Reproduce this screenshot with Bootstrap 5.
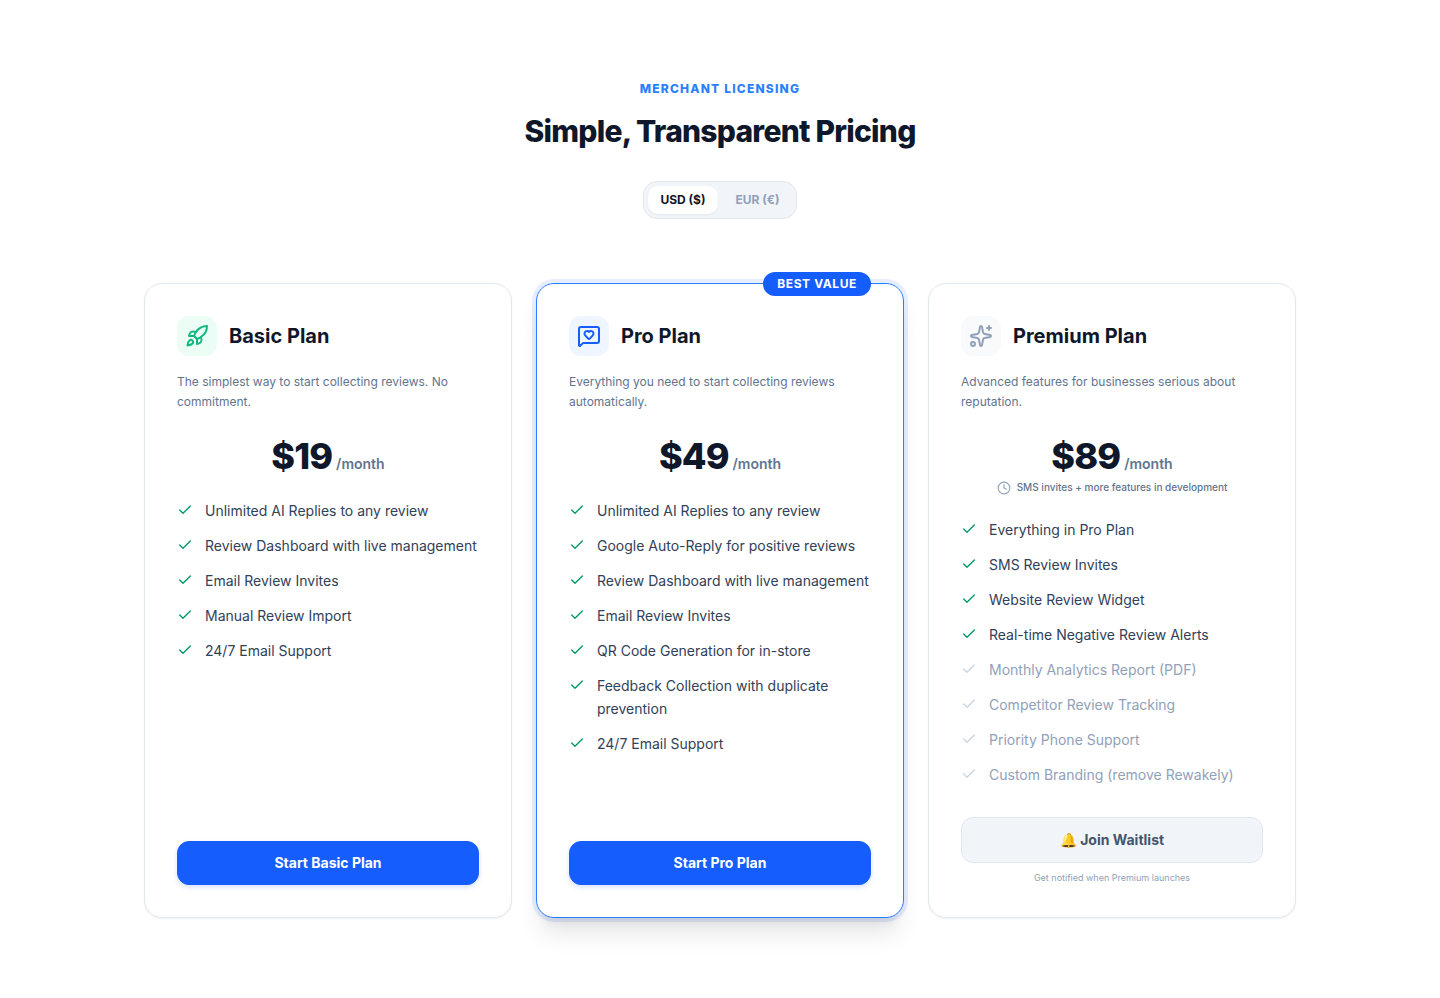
<!DOCTYPE html>
<html lang="en">
<head>
<meta charset="utf-8">
<meta name="viewport" content="width=device-width, initial-scale=1">
<title>Simple, Transparent Pricing</title>
<link href="https://cdn.jsdelivr.net/npm/bootstrap@5.3.0/dist/css/bootstrap.min.css" rel="stylesheet">
<style>
  body { font-family: Inter, "Liberation Sans", sans-serif; color: #0f172b; background: #fff; }
  svg { fill: none; stroke: currentColor; stroke-width: 2; stroke-linecap: round; stroke-linejoin: round; flex: none; }
  .pricing { max-width: 1176px; padding: 81px 12px 80px; }
  .eyebrow { font-size: 12px; line-height: 16px; font-weight: 800; letter-spacing: .1em; color: #2b7fff; margin-bottom: 15px; }
  .headline { font-size: 30px; line-height: 38px; font-weight: 800; letter-spacing: -.025em; margin-bottom: 31px; }
  .currency { background: #f1f5f9; border: 1px solid #e2e8f0; border-radius: 14px; padding: 4px; gap: 6px; margin-bottom: 64px; }
  .currency button { border: 0; border-radius: 10px; background: transparent; color: #90a1b9; font-size: 12px; line-height: 16px; font-weight: 700; padding: 6px 12px; }
  .currency button.active { background: #fff; color: #0f172b; box-shadow: 0 1px 2px rgba(0,0,0,.06); }
  .plan { --bs-card-border-color: #e2e8f0; --bs-card-border-radius: 18px; --bs-card-color: #0f172b; padding: 32px; box-shadow: 0 1px 2px rgba(0,0,0,.06); }
  .plan-best { --bs-card-border-color: #2b7fff; box-shadow: 0 0 0 4px rgba(21,93,252,.1), 0 20px 25px -5px rgba(0,0,0,.1), 0 8px 10px -6px rgba(0,0,0,.1); }
  .ribbon { top: -12px; right: 32px; background: #155dfc; color: #fff; font-size: 12px; line-height: 16px; font-weight: 700; letter-spacing: .05em; padding: 4px 14px; }
  .plan-icon { width: 40px; height: 40px; border-radius: 12px; }
  .tone-green { background: #ecfdf5; color: #10b981; }
  .tone-blue { background: #eff6ff; color: #155dfc; }
  .tone-slate { background: #f8fafc; color: #90a1b9; }
  .plan-name { font-size: 20px; line-height: 28px; }
  .plan-text { font-size: 12px; line-height: 20px; color: #62748e; margin-bottom: 24px; }
  .price { font-size: 36px; line-height: 40px; font-weight: 800; letter-spacing: -.025em; }
  .period { font-size: 14px; line-height: 20px; font-weight: 600; color: #62748e; }
  .plan-note { font-size: 10px; line-height: 15px; font-weight: 500; color: #62748e; margin-top: 4px; gap: 6px; }
  .plan-note svg { color: #90a1b9; }
  .features { font-size: 14px; line-height: 23px; color: #314158; margin: 23px 0 31px; row-gap: 12px; }
  .features li { display: flex; gap: 12px; }
  .features svg { color: #009966; margin-top: 3px; }
  .features .soon { color: #90a1b9; }
  .features .soon svg { color: #cad5e2; }
  .plan-btn { --bs-btn-font-size: 14px; --bs-btn-font-weight: 700; --bs-btn-line-height: 20px; --bs-btn-padding-y: 11px; --bs-btn-border-radius: 12px; --bs-btn-color: #fff; --bs-btn-bg: #155dfc; --bs-btn-border-color: #155dfc; --bs-btn-hover-color: #fff; --bs-btn-hover-bg: #1447e6; box-shadow: 0 2px 5px rgba(21,93,252,.18); }
  .plan-btn-wait { --bs-btn-color: #45556c; --bs-btn-bg: #f1f5f9; --bs-btn-border-color: #e2e8f0; --bs-btn-padding-y: 12px; --bs-btn-hover-color: #45556c; --bs-btn-hover-bg: #e2e8f0; box-shadow: none; }
  .plan-foot { font-size: 9px; line-height: 14px; color: #90a1b9; margin-top: 8px; }
</style>
</head>
<body>
<svg class="d-none">
  <symbol id="check" viewBox="0 0 24 24"><path d="M20 6 9 17l-5-5"/></symbol>
</svg>
<main class="pricing container-fluid mx-auto">
  <header class="d-flex flex-column align-items-center text-center">
    <p class="eyebrow text-uppercase">Merchant Licensing</p>
    <h1 class="headline">Simple, Transparent Pricing</h1>
    <div class="currency d-inline-flex" role="group" aria-label="Currency">
      <button type="button" class="active" aria-pressed="true">USD ($)</button>
      <button type="button" aria-pressed="false">EUR (€)</button>
    </div>
  </header>

  <div class="row row-cols-1 row-cols-lg-3 g-4">
    <div class="col">
      <article class="card plan h-100">
        <div class="d-flex align-items-center gap-2 mb-3">
          <span class="plan-icon tone-green d-flex align-items-center justify-content-center me-1">
            <svg width="24" height="24" viewBox="0 0 24 24"><path d="M4.5 16.5c-1.5 1.26-2 5-2 5s3.74-.5 5-2c.71-.84.7-2.13-.09-2.91a2.18 2.18 0 0 0-2.91-.09z"/><path d="m12 15-3-3a22 22 0 0 1 2-3.95A12.88 12.88 0 0 1 22 2c0 2.72-.78 7.5-6 11a22.35 22.35 0 0 1-4 2z"/><path d="M9 12H4s.55-3.03 2-4c1.62-1.08 5 0 5 0"/><path d="M12 15v5s3.03-.55 4-2c1.08-1.62 0-5 0-5"/></svg>
          </span>
          <h2 class="plan-name fw-bold mb-0">Basic Plan</h2>
        </div>
        <p class="plan-text">The simplest way to start collecting reviews. No commitment.</p>
        <div class="d-flex align-items-baseline justify-content-center gap-1">
          <span class="price">$19</span><span class="period">/month</span>
        </div>
        <ul class="features list-unstyled d-grid">
          <li><svg width="16" height="16"><use href="#check"/></svg><span>Unlimited AI Replies to any review</span></li>
          <li><svg width="16" height="16"><use href="#check"/></svg><span>Review Dashboard with live management</span></li>
          <li><svg width="16" height="16"><use href="#check"/></svg><span>Email Review Invites</span></li>
          <li><svg width="16" height="16"><use href="#check"/></svg><span>Manual Review Import</span></li>
          <li><svg width="16" height="16"><use href="#check"/></svg><span>24/7 Email Support</span></li>
        </ul>
        <button type="button" class="btn plan-btn w-100 mt-auto">Start Basic Plan</button>
      </article>
    </div>

    <div class="col">
      <article class="card plan plan-best h-100">
        <span class="ribbon position-absolute rounded-pill text-uppercase">Best Value</span>
        <div class="d-flex align-items-center gap-2 mb-3">
          <span class="plan-icon tone-blue d-flex align-items-center justify-content-center me-1">
            <svg width="24" height="24" viewBox="0 0 24 24"><path d="M22 17a2 2 0 0 1-2 2H6.828a2 2 0 0 0-1.414.586l-2.202 2.202A.71.71 0 0 1 2 21.286V5a2 2 0 0 1 2-2h16a2 2 0 0 1 2 2z"/><path d="M7.5 9.5c0 .687.265 1.383.697 1.844l3.009 3.264a1.14 1.14 0 0 0 .407.314 1 1 0 0 0 .783-.004 1.14 1.14 0 0 0 .398-.31l3.008-3.264A2.77 2.77 0 0 0 16.5 9.5 2.5 2.5 0 0 0 12 8a2.5 2.5 0 0 0-4.5 1.5"/></svg>
          </span>
          <h2 class="plan-name fw-bold mb-0">Pro Plan</h2>
        </div>
        <p class="plan-text">Everything you need to start collecting reviews automatically.</p>
        <div class="d-flex align-items-baseline justify-content-center gap-1">
          <span class="price">$49</span><span class="period">/month</span>
        </div>
        <ul class="features list-unstyled d-grid">
          <li><svg width="16" height="16"><use href="#check"/></svg><span>Unlimited AI Replies to any review</span></li>
          <li><svg width="16" height="16"><use href="#check"/></svg><span>Google Auto-Reply for positive reviews</span></li>
          <li><svg width="16" height="16"><use href="#check"/></svg><span>Review Dashboard with live management</span></li>
          <li><svg width="16" height="16"><use href="#check"/></svg><span>Email Review Invites</span></li>
          <li><svg width="16" height="16"><use href="#check"/></svg><span>QR Code Generation for in-store</span></li>
          <li><svg width="16" height="16"><use href="#check"/></svg><span>Feedback Collection with duplicate prevention</span></li>
          <li><svg width="16" height="16"><use href="#check"/></svg><span>24/7 Email Support</span></li>
        </ul>
        <button type="button" class="btn plan-btn w-100 mt-auto">Start Pro Plan</button>
      </article>
    </div>

    <div class="col">
      <article class="card plan h-100">
        <div class="d-flex align-items-center gap-2 mb-3">
          <span class="plan-icon tone-slate d-flex align-items-center justify-content-center me-1">
            <svg width="24" height="24" viewBox="0 0 24 24"><path d="M11.017 2.814a1 1 0 0 1 1.966 0l1.051 5.558a2 2 0 0 0 1.594 1.594l5.558 1.051a1 1 0 0 1 0 1.966l-5.558 1.051a2 2 0 0 0-1.594 1.594l-1.051 5.558a1 1 0 0 1-1.966 0l-1.051-5.558a2 2 0 0 0-1.594-1.594l-5.558-1.051a1 1 0 0 1 0-1.966l5.558-1.051a2 2 0 0 0 1.594-1.594z"/><path d="M20 2v4M22 4h-4"/><circle cx="4" cy="20" r="2"/></svg>
          </span>
          <h2 class="plan-name fw-bold mb-0">Premium Plan</h2>
        </div>
        <p class="plan-text">Advanced features for businesses serious about reputation.</p>
        <div class="d-flex align-items-baseline justify-content-center gap-1">
          <span class="price">$89</span><span class="period">/month</span>
        </div>
        <p class="plan-note d-flex align-items-center justify-content-center mb-0">
          <svg width="14" height="14" viewBox="0 0 24 24"><circle cx="12" cy="12" r="10"/><path d="M12 6v6l4 2"/></svg>
          <span>SMS invites + more features in development</span>
        </p>
        <ul class="features list-unstyled d-grid">
          <li><svg width="16" height="16"><use href="#check"/></svg><span>Everything in Pro Plan</span></li>
          <li><svg width="16" height="16"><use href="#check"/></svg><span>SMS Review Invites</span></li>
          <li><svg width="16" height="16"><use href="#check"/></svg><span>Website Review Widget</span></li>
          <li><svg width="16" height="16"><use href="#check"/></svg><span>Real-time Negative Review Alerts</span></li>
          <li class="soon"><svg width="16" height="16"><use href="#check"/></svg><span>Monthly Analytics Report (PDF)</span></li>
          <li class="soon"><svg width="16" height="16"><use href="#check"/></svg><span>Competitor Review Tracking</span></li>
          <li class="soon"><svg width="16" height="16"><use href="#check"/></svg><span>Priority Phone Support</span></li>
          <li class="soon"><svg width="16" height="16"><use href="#check"/></svg><span>Custom Branding (remove Rewakely)</span></li>
        </ul>
        <button type="button" class="btn plan-btn plan-btn-wait w-100 mt-auto">🔔 Join Waitlist</button>
        <p class="plan-foot text-center mb-0">Get notified when Premium launches</p>
      </article>
    </div>
  </div>
</main>
<script src="https://cdn.jsdelivr.net/npm/bootstrap@5.3.0/dist/js/bootstrap.bundle.min.js"></script>
</body>
</html>
